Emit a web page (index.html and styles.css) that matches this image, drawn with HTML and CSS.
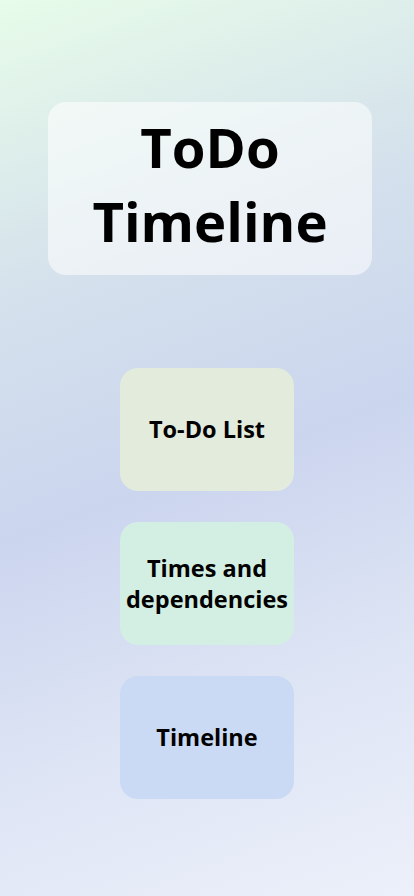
FILE: index.html
```html
<!DOCTYPE html>
<html lang="en">
<head>
<meta charset="utf-8">
<title>ToDo Timeline</title>
<link rel="stylesheet" href="styles.css">
</head>
<body>
<main class="page">
  <header class="title-card">
    <h1 class="title">ToDo Timeline</h1>
  </header>
  <nav class="menu">
    <a class="menu-btn btn-todo" href="#">To-Do List</a>
    <a class="menu-btn btn-times" href="#">Times and dependencies</a>
    <a class="menu-btn btn-timeline" href="#">Timeline</a>
  </nav>
</main>
</body>
</html>
```
FILE: styles.css
```css
html, body {
  margin: 0;
  padding: 0;
  height: 100%;
}
body {
  font-family: "Open Sans", "Noto Sans", sans-serif;
  background: linear-gradient(160deg, #e7fce9 0%, #d4e0ec 30%, #cbd5ee 52%, #dde4f4 75%, #ecf0fa 100%);
  color: #000;
}
.page {
  min-height: 100%;
  box-sizing: border-box;
  padding-top: 102px;
  display: flex;
  flex-direction: column;
  align-items: center;
}
.title-card {
  width: 324px;
  height: 173px;
  margin-left: 6px;
  box-sizing: border-box;
  padding-bottom: 10px;
  border-radius: 18px;
  background: rgba(255, 255, 255, 0.55);
  display: flex;
  align-items: center;
  justify-content: center;
}
.title {
  margin: 0;
  font-size: 54.5px;
  font-weight: 700;
  line-height: 74px;
  text-align: center;
  width: 260px;
}
.menu {
  margin-top: 93px;
  display: flex;
  flex-direction: column;
  gap: 31px;
}
.menu-btn {
  width: 174px;
  height: 123px;
  box-sizing: border-box;
  border-radius: 18px;
  display: flex;
  align-items: center;
  justify-content: center;
  text-align: center;
  text-decoration: none;
  color: #000;
  font-size: 23.5px;
  font-weight: 700;
  line-height: 31px;
  padding: 0 4px;
}
.btn-todo { background: #e2ebdc; }
.btn-times { background: #d3eee2; }
.btn-timeline { background: #cadaf4; }
```
